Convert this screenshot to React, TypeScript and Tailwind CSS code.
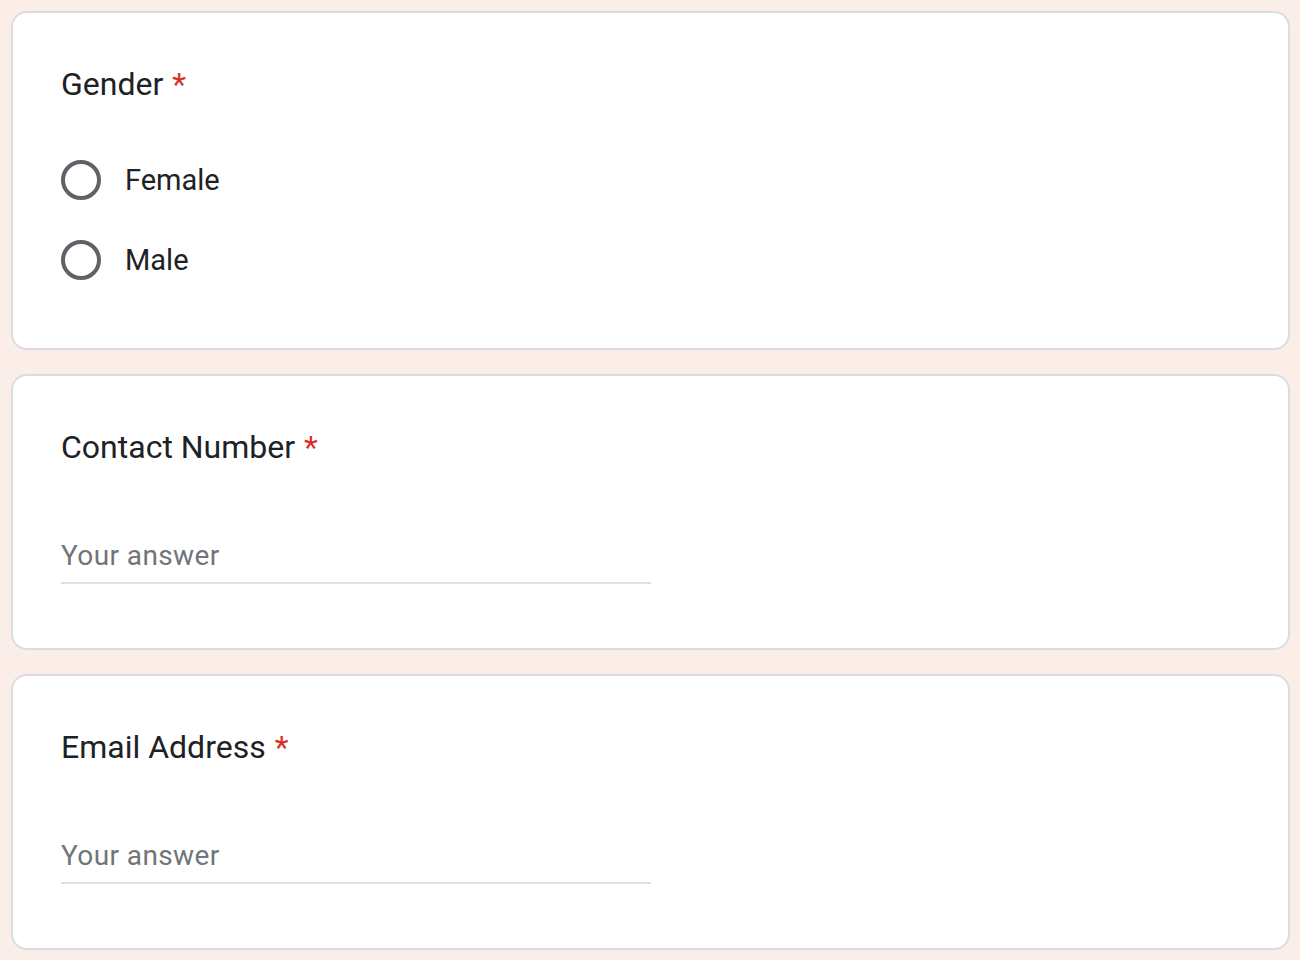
import React from 'react';

const Required: React.FC = () => <span className="text-[#d93025] ml-[9px]">*</span>;

const Card: React.FC<{ children: React.ReactNode }> = ({ children }) => (
  <div className="bg-white border-2 border-[#dadce0] rounded-[16px] px-[48px] pt-[49px] pb-[48px]">
    {children}
  </div>
);

const Radio: React.FC<{ label: string }> = ({ label }) => (
  <label className="flex items-center h-[80px] cursor-pointer">
    <span className="w-[40px] h-[40px] rounded-full border-[4px] border-[#5f6368] shrink-0" />
    <span className="ml-[24px] text-[29px] text-[#202124] leading-none">{label}</span>
  </label>
);

const TextAnswer: React.FC = () => (
  <div className="mt-[61px] mb-[16px] w-[590px] h-[54px] border-b-2 border-[#e0e0e0] flex items-center">
    <input
      type="text"
      placeholder="Your answer"
      className="w-full bg-transparent outline-none text-[28px] text-[#202124] placeholder:text-[#70757a] tracking-[0.4px]"
    />
  </div>
);

export default function App() {
  return (
    <div
      className="min-h-[960px] bg-[#fbede7] pl-[11px] pr-[10px] pt-[11px] flex flex-col gap-[24px]"
      style={{ fontFamily: 'Roboto, "Liberation Sans", sans-serif' }}
    >
      <Card>
        <h2 className="text-[32px] leading-[44px] text-[#202124]">
          Gender
          <Required />
        </h2>
        <div className="mt-[34px]">
          <Radio label="Female" />
          <Radio label="Male" />
        </div>
      </Card>

      <Card>
        <h2 className="text-[32px] leading-[44px] text-[#202124]">
          Contact Number
          <Required />
        </h2>
        <TextAnswer />
      </Card>

      <Card>
        <h2 className="text-[32px] leading-[44px] text-[#202124]">
          Email Address
          <Required />
        </h2>
        <TextAnswer />
      </Card>
    </div>
  );
}
